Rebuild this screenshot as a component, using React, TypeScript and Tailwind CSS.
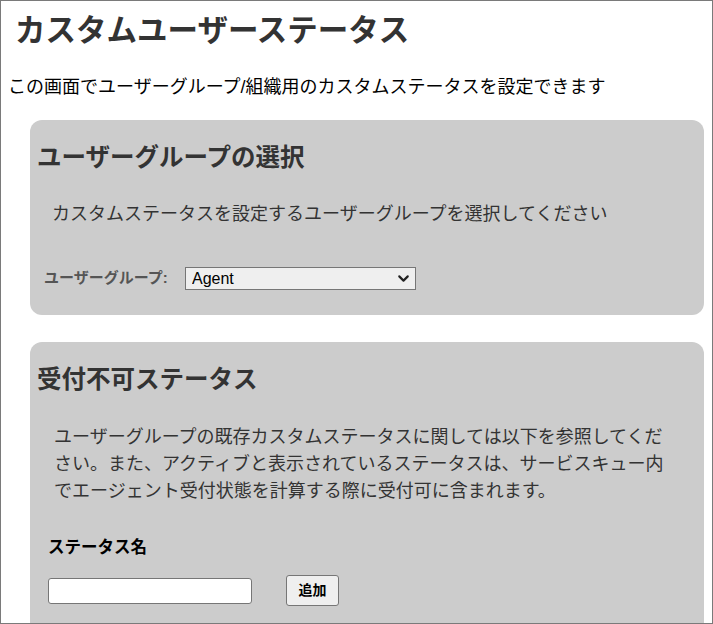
import { ChevronDown } from 'lucide-react';

const font = { fontFamily: '"Liberation Sans", "Noto Sans CJK JP", sans-serif' };

export default function App() {
  return (
    <div className="h-[624px] overflow-hidden border border-[#7a7a7a] bg-white" style={font}>
      {/* Page title */}
      <h1 className="ml-[14px] mt-[11px] text-[30.5px] font-bold leading-[36px] text-[#333]">
        カスタムユーザーステータス
      </h1>
      <p className="ml-[7px] mt-[26px] text-[18px] leading-[26px] text-black">
        この画面でユーザーグループ/組織用のカスタムステータスを設定できます
      </p>

      {/* User group selection */}
      <section className="ml-[29px] mr-[8px] mt-[20px] rounded-[12px] bg-[#cccccc] pb-[25px] pt-[22px]">
        <h2 className="pl-[7px] text-[24.5px] font-bold leading-[32px] text-[#333]">ユーザーグループの選択</h2>
        <p className="mt-[27px] pl-[22px] text-[18px] leading-[26px] text-[#333]">
          カスタムステータスを設定するユーザーグループを選択してください
        </p>
        <div className="mt-[40px] flex items-center pl-[14px]">
          <label className="w-[141px] text-[15px] font-bold text-[#555]">ユーザーグループ:</label>
          <div className="relative h-[23px] w-[231px]">
            <select className="h-full w-full appearance-none border border-[#767676] bg-[#efefef] pl-[6px] text-[16px] leading-[21px] text-black">
              <option>Agent</option>
            </select>
            <ChevronDown className="pointer-events-none absolute right-[4px] top-[3px] h-[17px] w-[17px] text-[#222]" strokeWidth={3} />
          </div>
        </div>
      </section>

      {/* Unavailable status */}
      <section className="ml-[29px] mr-[8px] mt-[27px] rounded-[12px] bg-[#cccccc] pb-[40px] pt-[22px]">
        <h2 className="pl-[7px] text-[24.5px] font-bold leading-[32px] text-[#333]">受付不可ステータス</h2>
        <p className="mt-[28px] pl-[24px] pr-[29px] text-[18px] leading-[27px] text-[#333]">
          ユーザーグループの既存カスタムステータスに関しては以下を参照してください。また、アクティブと表示されているステータスは、サービスキュー内でエージェント受付状態を計算する際に受付可に含まれます。
        </p>
        <div className="mt-[30px] pl-[18px] text-[16.5px] font-bold leading-[24px] text-black">ステータス名</div>
        <div className="mt-[16px] flex items-center gap-[34px] pl-[18px]">
          <input className="h-[26px] w-[204px] rounded-[3px] border border-[#767676] bg-white" />
          <button className="h-[31px] w-[53px] rounded-[3px] border border-[#767676] bg-[#efefef] text-[14px] font-bold text-black">
            追加
          </button>
        </div>
      </section>
    </div>
  );
}
